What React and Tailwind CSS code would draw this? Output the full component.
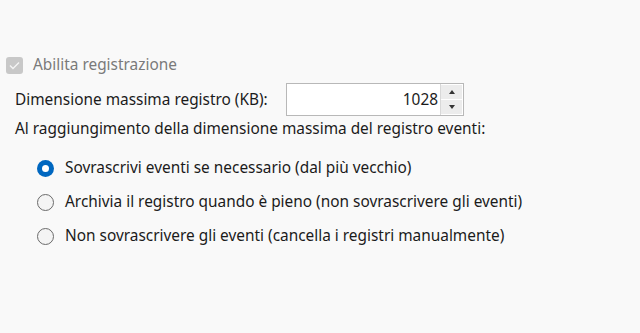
export default function App() {
  const font = { fontFamily: '"Noto Sans", "Open Sans", sans-serif' };
  return (
    <div className="w-[640px] h-[333px] bg-[#f9f9f9] text-[#1b1b1b] text-[15.4px] leading-[20px] overflow-hidden" style={font}>
      <div className="pt-[55px] pl-[6px] flex items-center gap-[10px]">
        <div className="w-[17px] h-[17px] rounded-[3px] bg-[#c8c8c8] flex items-center justify-center">
          <svg width="11" height="9" viewBox="0 0 11 9"><path d="M1 4.5 L4 7.5 L10 1.5" fill="none" stroke="#f4f4f4" strokeWidth="1.4" /></svg>
        </div>
        <span className="text-[#7a7a7a]">Abilita registrazione</span>
      </div>
      <div className="mt-[8px] pl-[15px] flex items-center">
        <span className="w-[271px]">Dimensione massima registro (KB):</span>
        <div className="w-[178px] h-[33px] border border-[#b8b8b8] bg-white flex">
          <div className="flex-1 flex items-center justify-end pr-[2px]">1028</div>
          <div className="w-[23px] flex flex-col border-l border-[#d8d8d8] py-[1px] pr-[1px] gap-[1px]">
            <div className="flex-1 bg-[#ececec] flex items-center justify-center">
              <svg width="6" height="4" viewBox="0 0 6 4"><path d="M0 4 L3 0 L6 4 Z" fill="#333" /></svg>
            </div>
            <div className="flex-1 bg-[#ececec] flex items-center justify-center">
              <svg width="6" height="4" viewBox="0 0 6 4"><path d="M0 0 L3 4 L6 0 Z" fill="#333" /></svg>
            </div>
          </div>
        </div>
      </div>
      <div className="mt-[3px] pl-[15px]">Al raggiungimento della dimensione massima del registro eventi:</div>
      <div className="mt-[19px] pl-[37px] flex flex-col gap-[14px]">
        {[
          ['Sovrascrivi eventi se necessario (dal più vecchio)', true],
          ['Archivia il registro quando è pieno (non sovrascrivere gli eventi)', false],
          ['Non sovrascrivere gli eventi (cancella i registri manualmente)', false],
        ].map(([t, on]) => (
          <div key={t} className="flex items-center gap-[11px]">
            {on ? (
              <div className="w-[17px] h-[17px] rounded-full bg-[#0067c0] flex items-center justify-center">
                <div className="w-[7px] h-[7px] rounded-full bg-white" />
              </div>
            ) : (
              <div className="w-[17px] h-[17px] rounded-full border border-[#6b6b6b] bg-[#f4f4f4]" />
            )}
            <span>{t}</span>
          </div>
        ))}
      </div>
    </div>
  );
}
